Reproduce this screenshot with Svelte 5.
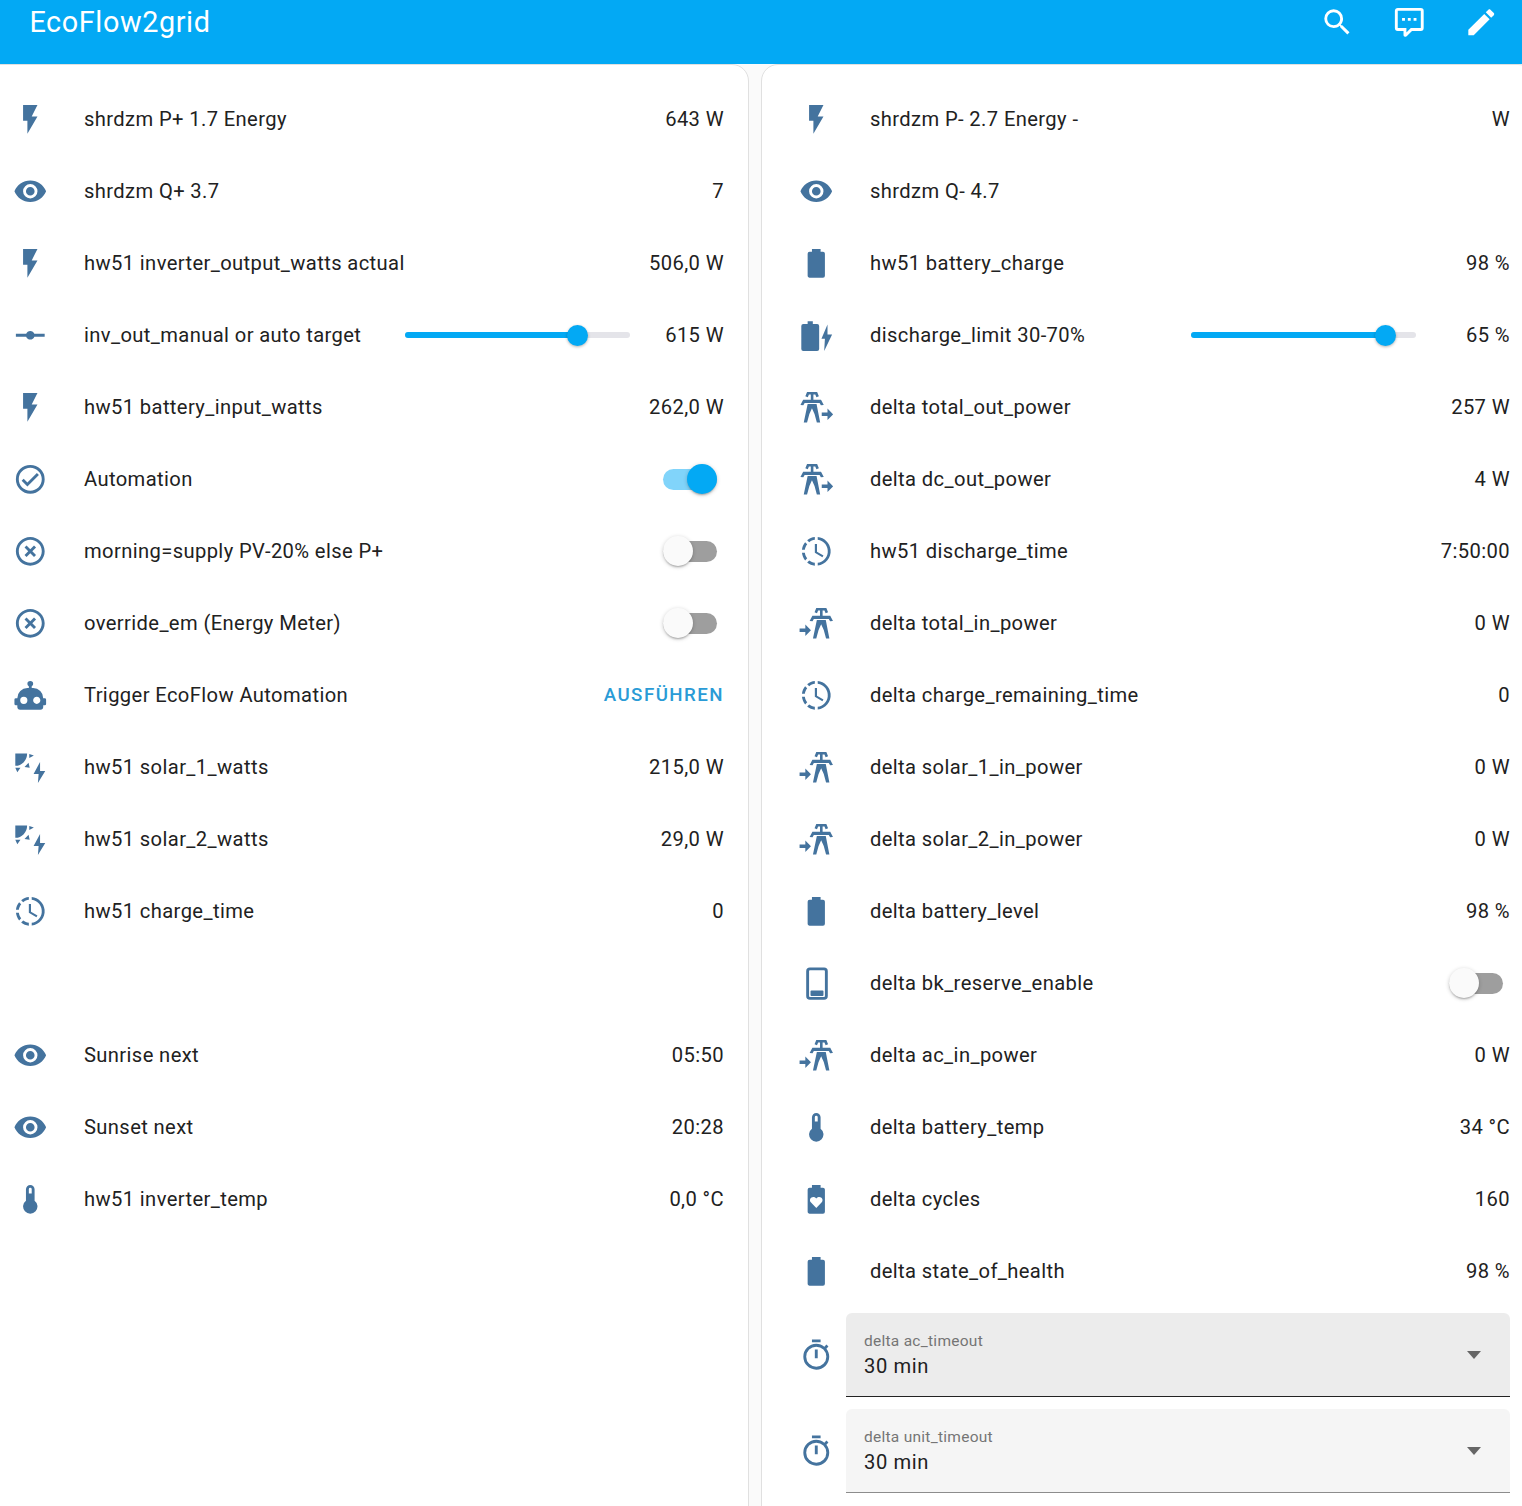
<script>
  const tower = (dx) =>
    `M${4.4 + dx} 4.4l1.2-3h7l1.2 3-1.7.6-.8-1.8h-4.4l-.8 1.8zM${8.2 + dx} 3.2h1.8v3.6h-1.8zM${2.9 + dx} 6.8h12.4l1.9 3.7-2 .1-.9-1.5h-10.4l-.9 1.5-2-.1zM${6 + dx} 9.8h6.2l2.5 12.8h-2.3l-1.6-6-1.8-4-1.8 4-1.6 6h-2.3z`;
  const I = {
    flash: 'M7,2V13H10V22L17,10H13L17,2H7Z',
    eye: 'M12,9A3,3 0 0,0 9,12A3,3 0 0,0 12,15A3,3 0 0,0 15,12A3,3 0 0,0 12,9M12,17A5,5 0 0,1 7,12A5,5 0 0,1 12,7A5,5 0 0,1 17,12A5,5 0 0,1 12,17M12,4.5C7,4.5 2.73,7.61 1,12C2.73,16.39 7,19.5 12,19.5C17,19.5 21.27,16.39 23,12C21.27,7.61 17,4.5 12,4.5Z',
    vertex: 'M2,11H9.17C9.58,9.83 10.69,9 12,9C13.31,9 14.42,9.83 14.83,11H22V13H14.83C14.42,14.17 13.31,15 12,15C10.69,15 9.58,14.17 9.17,13H2V11Z',
    check: 'M12,2A10,10 0 0,0 2,12A10,10 0 0,0 12,22A10,10 0 0,0 22,12A10,10 0 0,0 12,2M12,20C7.59,20 4,16.41 4,12C4,7.59 7.59,4 12,4C16.41,4 20,7.59 20,12C20,16.41 16.41,20 12,20M16.59,7.58L10,14.17L7.41,11.59L6,13L10,17L18,9L16.59,7.58Z',
    close: 'M12,20C7.59,20 4,16.41 4,12C4,7.59 7.59,4 12,4C16.41,4 20,7.59 20,12C20,16.41 16.41,20 12,20M12,2C6.47,2 2,6.47 2,12C2,17.53 6.47,22 12,22C17.53,22 22,17.53 22,12C22,6.47 17.53,2 12,2M14.59,8L12,10.59L9.41,8L8,9.41L10.59,12L8,14.59L9.41,16L12,13.41L14.59,16L16,14.59L13.41,12L16,9.41L14.59,8Z',
    robot: 'M12,2A2,2 0 0,1 14,4C14,4.74 13.6,5.39 13,5.73V7H14A7,7 0 0,1 21,14H22A1,1 0 0,1 23,15V18A1,1 0 0,1 22,19H21V20A2,2 0 0,1 19,22H5A2,2 0 0,1 3,20V19H2A1,1 0 0,1 1,18V15A1,1 0 0,1 2,14H3A7,7 0 0,1 10,7H11V5.73C10.4,5.39 10,4.74 10,4A2,2 0 0,1 12,2M7.5,13A2.5,2.5 0 0,0 5,15.5A2.5,2.5 0 0,0 7.5,18A2.5,2.5 0 0,0 10,15.5A2.5,2.5 0 0,0 7.5,13M16.5,13C15.12,13 14,14.12 14,15.5C14,16.88 15.12,18 16.5,18C17.88,18 19,16.88 19,15.5C19,14.12 17.88,13 16.5,13Z',
    sun: 'M1.6 2.5H9.8A8.4 8.4 0 0 1 1.6 11ZM11.3 2.8L14.5 3.8L11.3 5.5ZM8 11.8L10.8 8.8L11.6 12.3ZM1.6 12.4H5.2L3 15.4ZM18.8 8.3L14.3 16.6H17.8L17.3 22.9L22.4 14.6H18.8Z',
    clock: 'M13,2.03V2.05L13,4.05C17.39,4.59 20.5,8.58 19.96,12.97C19.5,16.61 16.64,19.5 13,19.93V21.93C18.5,21.38 22.5,16.5 21.95,11C21.5,6.25 17.73,2.5 13,2.03M11,2.06C9.05,2.25 7.19,3 5.67,4.26L7.1,5.74C8.22,4.84 9.57,4.26 11,4.06V2.06M4.26,5.67C3,7.19 2.25,9.04 2.05,11H4.05C4.24,9.58 4.8,8.23 5.69,7.1L4.26,5.67M2.06,13C2.26,14.96 3.03,16.81 4.27,18.33L5.69,16.9C4.81,15.77 4.24,14.42 4.06,13H2.06M7.1,18.37L5.67,19.74C7.18,21 9.04,21.79 11,22V20C9.58,19.82 8.23,19.25 7.1,18.37M12.5,7V12.25L17,14.92L16.25,16.15L11,13V7H12.5Z',
    therm: 'M15 13V5A3 3 0 0 0 9 5V13A5 5 0 1 0 15 13M12 4A1 1 0 0 1 13 5V8H11V5A1 1 0 0 1 12 4Z',
    battery: 'M16.67,4H15V2H9V4H7.33A1.33,1.33 0 0,0 6,5.33V20.67C6,21.4 6.6,22 7.33,22H16.67A1.33,1.33 0 0,0 18,20.67V5.33C18,4.6 17.4,4 16.67,4Z',
    batbolt: 'M9.6 2.3H6V4.2H3A1.4 1.4 0 0 0 1.6 5.6V21.5A1.4 1.4 0 0 0 3 22.9H12.6A1.4 1.4 0 0 0 14 21.5V5.6A1.4 1.4 0 0 0 12.6 4.2H9.6ZM19.8 4.6L15.6 14.5H18L17.5 22.9L23 11.5H19.8Z',
    export: tower(0) + 'M15.8 15.7h4v-2.8l3.9 4-3.9 4v-2.8h-4z',
    import: tower(6.4) + 'M.4 15.7h4v-2.8l3.9 4-3.9 4v-2.8h-4z',
    heart: 'M16.67,4H15V2H9V4H7.33A1.33,1.33 0 0,0 6,5.33V20.67C6,21.4 6.6,22 7.33,22H16.67A1.33,1.33 0 0,0 18,20.67V5.33C18,4.6 17.4,4 16.67,4ZM12 18L8.2 14.1C6.3 11.8 9.5 8.8 12 11.4C14.5 8.8 17.7 11.8 15.8 14.1Z',
    timer: 'M12,20A7,7 0 0,1 5,13A7,7 0 0,1 12,6A7,7 0 0,1 19,13A7,7 0 0,1 12,20M19.03,7.39L20.45,5.97C20,5.46 19.55,5 19.04,4.56L17.62,6C16.07,4.74 14.12,4 12,4A9,9 0 0,0 3,13A9,9 0 0,0 12,22C17,22 21,17.97 21,13C21,10.88 20.26,8.93 19.03,7.39M11,14H13V8H11M15,1H9V3H15V1Z',
    phone: 'M7.6 1H17.4A2.6 2.6 0 0 1 20 3.6V20.9A2.6 2.6 0 0 1 17.4 23.5H7.6A2.6 2.6 0 0 1 5 20.9V3.6A2.6 2.6 0 0 1 7.6 1ZM7.6 3A.6.6 0 0 0 7 3.6V20.9A.6.6 0 0 0 7.6 21.5H17.4A.6.6 0 0 0 18 20.9V3.6A.6.6 0 0 0 17.4 3ZM8.6 17H16.4A.6.6 0 0 1 17 17.6V20.2A.6.6 0 0 1 16.4 20.8H8.6A.6.6 0 0 1 8 20.2V17.6A.6.6 0 0 1 8.6 17Z',
    search: 'M9.5,3A6.5,6.5 0 0,1 16,9.5C16,11.11 15.41,12.59 14.44,13.73L14.71,14H15.5L20.5,19L19,20.5L14,15.5V14.71L13.73,14.44C12.59,15.41 11.11,16 9.5,16A6.5,6.5 0 0,1 3,9.5A6.5,6.5 0 0,1 9.5,3M9.5,5C7,5 5,7 5,9.5C5,12 7,14 9.5,14C12,14 14,12 14,9.5C14,7 12,5 9.5,5Z',
    comment: 'M9,22A1,1 0 0,1 8,21V18H4A2,2 0 0,1 2,16V4C2,2.89 2.9,2 4,2H20A2,2 0 0,1 22,4V16A2,2 0 0,1 20,18H13.9L10.2,21.71C10,21.9 9.75,22 9.5,22V22H9M10,16V19.08L13.08,16H20V4H4V16H10M17,11H15V9H17V11M13,11H11V9H13V11M9,11H7V9H9V11Z',
    pencil: 'M20.71,7.04C21.1,6.65 21.1,6 20.71,5.63L18.37,3.29C18,2.9 17.35,2.9 16.96,3.29L15.12,5.12L18.87,8.87M3,17.25V21H6.75L17.81,9.93L14.06,6.18L3,17.25Z'
  };

  const left = [
    { i: 'flash', n: 'shrdzm P+ 1.7 Energy', v: '643 W' },
    { i: 'eye', n: 'shrdzm Q+ 3.7', v: '7' },
    { i: 'flash', n: 'hw51 inverter_output_watts actual', v: '506,0 W' },
    { i: 'vertex', n: 'inv_out_manual or auto target', v: '615 W', slider: 172 },
    { i: 'flash', n: 'hw51 battery_input_watts', v: '262,0 W' },
    { i: 'check', n: 'Automation', toggle: true },
    { i: 'close', n: 'morning=supply PV-20% else P+', toggle: false },
    { i: 'close', n: 'override_em (Energy Meter)', toggle: false },
    { i: 'robot', n: 'Trigger EcoFlow Automation', action: 'AUSFÜHREN' },
    { i: 'sun', n: 'hw51 solar_1_watts', v: '215,0 W' },
    { i: 'sun', n: 'hw51 solar_2_watts', v: '29,0 W' },
    { i: 'clock', n: 'hw51 charge_time', v: '0' },
    { spacer: true },
    { i: 'eye', n: 'Sunrise next', v: '05:50' },
    { i: 'eye', n: 'Sunset next', v: '20:28' },
    { i: 'therm', n: 'hw51 inverter_temp', v: '0,0 °C' }
  ];
  const right = [
    { i: 'flash', n: 'shrdzm P- 2.7 Energy -', v: 'W' },
    { i: 'eye', n: 'shrdzm Q- 4.7', v: '' },
    { i: 'battery', n: 'hw51 battery_charge', v: '98 %' },
    { i: 'batbolt', n: 'discharge_limit 30-70%', v: '65 %', slider: 194 },
    { i: 'export', n: 'delta total_out_power', v: '257 W' },
    { i: 'export', n: 'delta dc_out_power', v: '4 W' },
    { i: 'clock', n: 'hw51 discharge_time', v: '7:50:00' },
    { i: 'import', n: 'delta total_in_power', v: '0 W' },
    { i: 'clock', n: 'delta charge_remaining_time', v: '0' },
    { i: 'import', n: 'delta solar_1_in_power', v: '0 W' },
    { i: 'import', n: 'delta solar_2_in_power', v: '0 W' },
    { i: 'battery', n: 'delta battery_level', v: '98 %' },
    { i: 'phone', n: 'delta bk_reserve_enable', toggle: false },
    { i: 'import', n: 'delta ac_in_power', v: '0 W' },
    { i: 'therm', n: 'delta battery_temp', v: '34 °C' },
    { i: 'heart', n: 'delta cycles', v: '160' },
    { i: 'battery', n: 'delta state_of_health', v: '98 %' }
  ];
  const selects = [
    { l: 'delta ac_timeout', v: '30 min', hover: true },
    { l: 'delta unit_timeout', v: '30 min', hover: false }
  ];
</script>

{#snippet icon(name, cls = 'ic')}
  <svg class={cls} viewBox="0 0 24 24" aria-hidden="true"><path d={I[name]} /></svg>
{/snippet}

{#snippet rows(list)}
  {#each list as r}
    {#if r.spacer}
      <div class="row"></div>
    {:else}
      <div class="row">
        {@render icon(r.i)}
        <div class="name">{r.n}</div>
        {#if r.slider !== undefined}
          <div class="slider">
            <div class="fill" style="width:{r.slider}px"></div>
            <div class="thumb" style="left:{r.slider}px"></div>
          </div>
          <div class="value narrow">{r.v}</div>
        {:else if r.toggle !== undefined}
          <div class="toggle" class:on={r.toggle}><div class="knob"></div></div>
        {:else if r.action}
          <div class="action">{r.action}</div>
        {:else}
          <div class="value">{r.v}</div>
        {/if}
      </div>
    {/if}
  {/each}
{/snippet}

<div class="page">
  <header>
    <div class="title">EcoFlow2grid</div>
    <div class="actions">
      <span class="hbtn">{@render icon('search', 'hic')}</span>
      <span class="hbtn">{@render icon('comment', 'hic')}</span>
      <span class="hbtn">{@render icon('pencil', 'hic')}</span>
    </div>
  </header>
  <main>
    <section class="card">{@render rows(left)}</section>
    <section class="card">
      {@render rows(right)}
      {#each selects as s}
        <div class="selrow">
          {@render icon('timer')}
          <div class="select" class:hover={s.hover}>
            <div class="sel-text">
              <div class="sel-label">{s.l}</div>
              <div class="sel-value">{s.v}</div>
            </div>
            <div class="arrow"></div>
          </div>
        </div>
      {/each}
    </section>
  </main>
</div>

<style>
  :global(body) {
    margin: 0;
    overflow: hidden;
    background: #fafafa;
  }
  .page {
    width: 1522px;
    height: 1506px;
    overflow: hidden;
    font-family: Roboto, "Liberation Sans", sans-serif;
    color: #212121;
    background: #fafafa;
  }
  header {
    height: 64px;
    background: #03a9f4;
    color: #fff;
    display: flex;
    justify-content: space-between;
    align-items: flex-start;
    padding: 0 5px 0 29.4px;
    box-sizing: border-box;
  }
  .title {
    font-size: 28.8px;
    line-height: 44px;
    letter-spacing: 0.6px;
  }
  .actions {
    display: flex;
    height: 44px;
    align-items: center;
  }
  .hbtn {
    width: 72px;
    display: flex;
    justify-content: center;
  }
  .hic {
    width: 34.56px;
    height: 34.56px;
    fill: #fff;
    display: block;
  }
  main {
    display: grid;
    grid-template-columns: 774px 774px;
    gap: 12px;
    margin-left: -25px;
  }
  .card {
    box-sizing: border-box;
    height: 1500px;
    background: #fff;
    border: 1px solid #e0e0e0;
    border-radius: 17px;
    padding: 18px 24px 0 36.6px;
  }
  .row {
    height: 72px;
    display: flex;
    align-items: center;
  }
  .ic {
    width: 34.56px;
    height: 34.56px;
    flex: none;
    fill: #44739e;
    display: block;
  }
  .name {
    flex: 1;
    margin-left: 36.84px;
    font-size: 20.16px;
    letter-spacing: 0.39px;
    white-space: nowrap;
  }
  .value {
    font-size: 20.16px;
    letter-spacing: 0.39px;
    text-align: right;
    white-space: nowrap;
  }
  .value.narrow {
    width: 94px;
    flex: none;
  }
  .action {
    font-size: 18.72px;
    font-weight: 500;
    letter-spacing: 1.45px;
    color: #2a9bd6;
  }
  .slider {
    position: relative;
    width: 225px;
    height: 6px;
    flex: none;
    background: #e4e4e9;
    border-radius: 3px;
  }
  .fill {
    height: 100%;
    background: #03a9f4;
    border-radius: 3px;
  }
  .thumb {
    position: absolute;
    top: 50%;
    width: 21px;
    height: 21px;
    margin: -10.5px 0 0 -10.5px;
    border-radius: 50%;
    background: #03a9f4;
    box-shadow: 0 1px 3px rgba(0, 0, 0, 0.3);
  }
  .toggle {
    position: relative;
    width: 54px;
    height: 21px;
    flex: none;
    margin-right: 7px;
    border-radius: 11px;
    background: #9e9e9e;
  }
  .toggle.on {
    background: #81d4fa;
  }
  .knob {
    position: absolute;
    left: 0;
    top: -5px;
    width: 30px;
    height: 30px;
    border-radius: 50%;
    background: #fafafa;
    box-shadow: 0 2px 2px -1px rgba(0, 0, 0, 0.25), 0 1px 4px rgba(0, 0, 0, 0.2);
  }
  .toggle.on .knob {
    left: 24px;
    background: #03a9f4;
  }
  .selrow {
    display: flex;
    align-items: center;
    margin-top: 6px;
    margin-bottom: 6px;
  }
  .selrow + .selrow {
    margin-top: 12px;
  }
  .select {
    box-sizing: border-box;
    flex: 1;
    height: 84px;
    margin-left: 12.84px;
    background: #f5f5f5;
    border-bottom: 1px solid #8c8c8c;
    border-radius: 6px 6px 0 0;
    padding: 0 28.6px 0 18px;
    display: flex;
    align-items: center;
    justify-content: space-between;
  }
  .select.hover {
    background: #ececec;
    border-bottom-color: #222;
  }
  .sel-text {
    display: flex;
    flex-direction: column;
    margin-top: -1px;
  }
  .sel-label {
    font-size: 15.5px;
    line-height: 24px;
    letter-spacing: 0.27px;
    color: #757575;
  }
  .sel-value {
    font-size: 20.16px;
    line-height: 26px;
    letter-spacing: 0.6px;
  }
  .arrow {
    width: 0;
    height: 0;
    border-left: 7.5px solid transparent;
    border-right: 7.5px solid transparent;
    border-top: 8px solid #666;
  }
</style>
